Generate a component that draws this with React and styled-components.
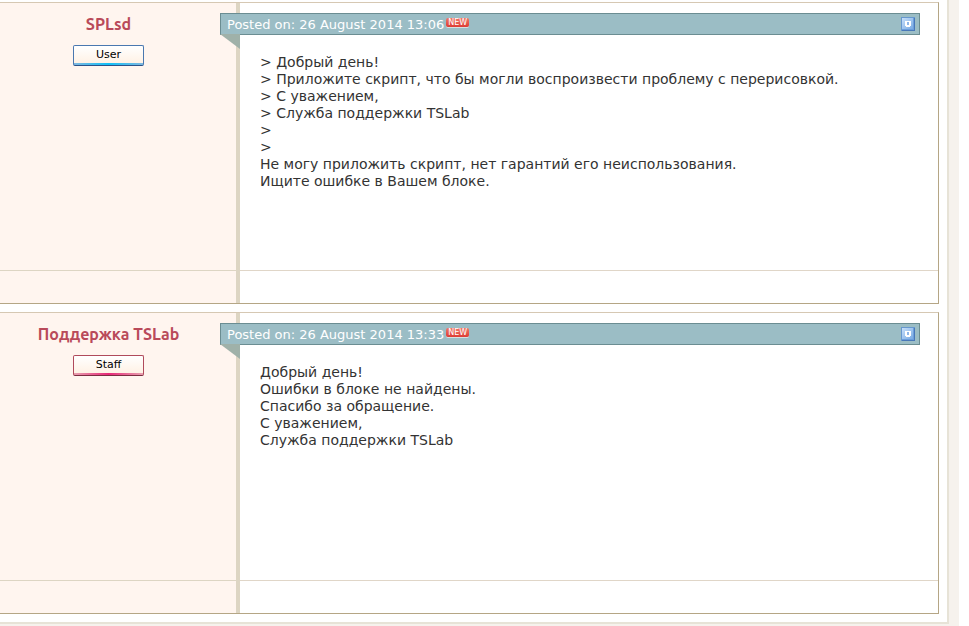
import styled, { createGlobalStyle } from "styled-components"

const GlobalStyle = createGlobalStyle`
    * {
        box-sizing: border-box;
    }
    body {
        margin: 0;
        background-color: #fff;
        color: #333;
        font: 14px/17px Verdana, "DejaVu Sans", sans-serif;
    }
`

const Backdrop = styled.div`
    margin-right: 10px;
    padding: 0 10px 2px 0;
    background-color: #f6f2ed;
`

const Panel = styled.main`
    display: flex;
    flex-direction: column;
    gap: 8px;
    padding: 2px 8px 8px 0;
    background-color: #fff;
    border: solid #e7e3d7;
    border-width: 0 2px 2px 0;
`

const Post = styled.article`
    display: grid;
    grid-template-columns: 240px 1fr;
    grid-template-rows: minmax(267px, auto) 33px;
    border: solid #b5a685;
    border-width: 1px 1px 1px 0;
    border-top-color: #d6c8b3;
`

const Author = styled.div`
    display: flex;
    flex-direction: column;
    align-items: center;
    gap: 10px;
    padding: 10px 19px 0 0;
    background-color: #fff5ef;
    border-right: 4px solid #ddd5c3;
`

const AuthorName = styled.h2`
    margin: 0;
    color: #b94a5a;
    font: bold 16px/22px Ubuntu, "Noto Sans", sans-serif;
`

const ranks = {
    user: { border: "#4a78b0", dark: "#2c5288", glow: "#10c0f8", fade: "#80b8e0" },
    staff: { border: "#b04a5c", dark: "#7c2c40", glow: "#e82878", fade: "#e8a0b0" },
}

const Rank = styled.span`
    width: 71px;
    height: 21px;
    padding-bottom: 3px;
    border: 1px solid ${ props => ranks[props.$rank].border };
    border-bottom-color: ${ props => ranks[props.$rank].dark };
    border-radius: 2px;
    background:
        linear-gradient(90deg, ${ props => `${ranks[props.$rank].fade}, ${ranks[props.$rank].glow}, ${ranks[props.$rank].fade}` }) bottom / 100% 2px no-repeat,
        linear-gradient(#fff, #fff0e2);
    color: #000;
    font-size: 11px;
    line-height: 17px;
    text-align: center;
`

const Content = styled.div`
    min-width: 0;
    padding: 10px 18px 20px 0;
`

const PostBar = styled.header`
    position: relative;
    display: flex;
    align-items: center;
    gap: 2px;
    height: 22px;
    margin-left: -20px;
    padding: 0 4px 0 6px;
    background-color: #9bbdc5;
    border: 1px solid #6b8d92;
    color: #fff;
    font-size: 13px;
`

// folded ribbon corner under the bar
const Fold = styled.span`
    position: absolute;
    top: 100%;
    left: -1px;
    width: 20px;
    height: 15px;
    background-color: #9fb1a9;
    clip-path: polygon(0 0, 100% 0, 100% 100%);
`

const NewTag = styled.span`
    width: 23px;
    height: 9px;
    margin-bottom: 4px;
    background: linear-gradient(#f07868, #dd3c34);
    border-radius: 2px;
    box-shadow: 0 1px #d8dfe0;
    color: #fff;
    font: 8px/9px "DejaVu Sans", sans-serif;
    text-align: center;
`

const PostLink = styled.button`
    display: flex;
    width: 14px;
    height: 14px;
    margin-left: auto;
    padding: 0;
    border: 0;
    background: none;
    cursor: pointer;
`

const Message = styled.p`
    margin: 19px 0 0 20px;
    white-space: pre-line;
`

const FooterLeft = styled.div`
    background: linear-gradient(#ddd5c3, #ddd5c3) top / 100% 1px no-repeat #fff5ef;
    border-right: 4px solid #ddd5c3;
`

const FooterRight = styled.div`
    border-top: 1px solid #e0d6c8;
`

const PostIcon = () => (
    <svg width="14" height="14" viewBox="0 0 14 14" shapeRendering="crispEdges">
        <defs>
            <linearGradient id="post-icon" x1="0" y1="0" x2="1" y2="1">
                <stop offset="0" stopColor="#c8e0fa" />
                <stop offset="1" stopColor="#70a5e2" />
            </linearGradient>
        </defs>
        <path d="M0 0h14v14H0z" fill="#6798cf" />
        <path d="M13 1h1v13H1v-1h12z" fill="#4978b8" />
        <path d="M1 1h12v12H1z" fill="url(#post-icon)" />
        <path d="M12 1h1v12H1v-1h11z" fill="#6c9edc" />
        <path d="M4 4h6v5H9v1H5V9H4z" fill="#fff" />
        <path d="M6 5h2v3H6z" fill="#8fb8ea" />
    </svg>
)

const posts = [
    {
        author: "SPLsd",
        rank: "user",
        rankName: "User",
        date: "26 August 2014 13:06",
        text: `> Добрый день!
> Приложите скрипт, что бы могли воспроизвести проблему с перерисовкой.
> С уважением,
> Служба поддержки TSLab
>
>
Не могу приложить скрипт, нет гарантий его неиспользования.
Ищите ошибке в Вашем блоке.`,
    },
    {
        author: "Поддержка TSLab",
        rank: "staff",
        rankName: "Staff",
        date: "26 August 2014 13:33",
        text: `Добрый день!
Ошибки в блоке не найдены.
Спасибо за обращение.
С уважением,
Служба поддержки TSLab`,
    },
]

const ForumPost = ({ author, rank, rankName, date, text }) => (
    <Post>
        <Author>
            <AuthorName>{ author }</AuthorName>
            <Rank $rank={ rank }>{ rankName }</Rank>
        </Author>
        <Content>
            <PostBar>
                <span>Posted on: { date }</span>
                <NewTag>NEW</NewTag>
                <PostLink type="button" aria-label="Link to this post">
                    <PostIcon />
                </PostLink>
                <Fold />
            </PostBar>
            <Message>{ text }</Message>
        </Content>
        <FooterLeft />
        <FooterRight />
    </Post>
)

const App = () => (
    <>
        <GlobalStyle />
        <Backdrop>
            <Panel>
                { posts.map(post => <ForumPost key={ post.date } { ...post } />) }
            </Panel>
        </Backdrop>
    </>
)

export default App
